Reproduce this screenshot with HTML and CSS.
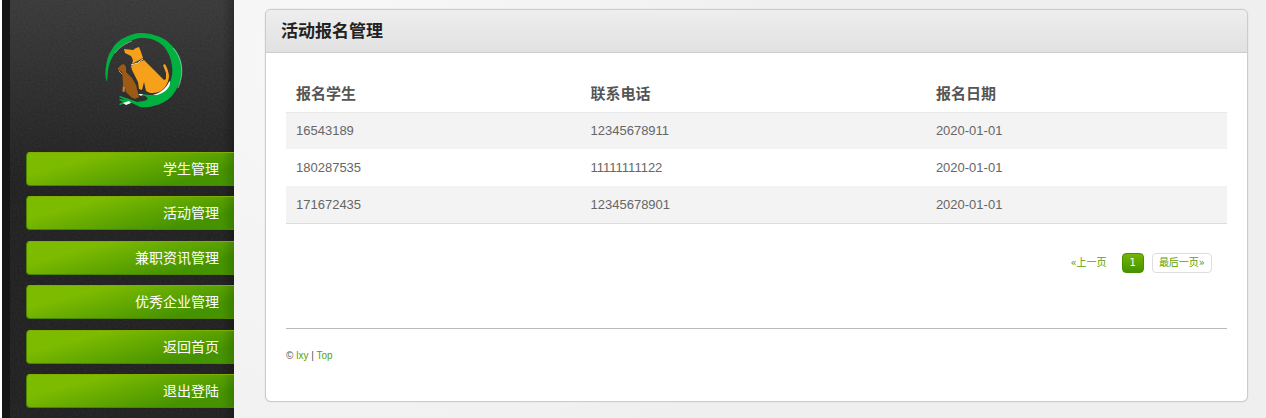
FILE: index.html
```
<!DOCTYPE html>
<html lang="zh-CN">
<head>
    <meta charset="UTF-8">
    <meta name="viewport" content="width=device-width, initial-scale=1.0">
    <title>活动报名管理</title>
    <link rel="stylesheet" href="styles.css">
</head>
<body id="top">

    <div class="sidebar">
        <svg class="logo" viewBox="0 0 80 80" aria-hidden="true">
            <!-- ring and hand -->
            <path fill="#00b140" d="M3 50C1 45 1 40 2 34C3 28 4 23 7 19C11 12 15 8 20 6C25 3 31 1 37 1C43 1 48 2 53 4C60 6 65 10 70 16C75 22 78 29 78 37C78 44 77 50 73 56C70 62 66 67 60 70C53 74 44 76 36 75L28 71L22 71L16 73L15 72L19 70L15 68L16 67L22 68L15 65L16 64L25 67L33 70L40 69C44 68 45 66 41 64L35 63L36 62L46 63C51 63 55 62 58 60C62 57 64 54 66 50C68 45 69 40 68 34C67 28 66 24 63 19C60 14 57 11 52 9C47 6 42 6 36 6C31 7 27 8 23 11C18 13 14 17 11 21C7 26 5 32 4 38Z"/>
            <path fill="#fff" d="M49 63C57 61 62 56 65 50L66 49C67 55 61 61 53 63ZM19 71L25 69L27 71L22 73ZM34 62L39 62L37 64Z"/>
            <path fill="none" stroke="#ccc" stroke-width="0.6" d="M11 21C14 17 18 13 28 9M69 16C79 27 80 43 74 56"/>
            <!-- big dog -->
            <path fill="#f7a11a" d="M20 17L29 18L32 16L35 15L37 20L39 26L28 32L29 28L27 24L21 21Z"/>
            <path fill="#f7a11a" d="M27 34L40 28L50 38L60 48L62 47L62 41L59 33L61 32C64 37 65 42 65 45C64 51 62 55 57 59C53 61 49 61 46 61L42 59L40 50L38 58L35 57L34 50L28 38Z"/>
            <path fill="none" stroke="#fbe0b5" stroke-width="1" d="M27 33Q34 32 39 27"/>
            <!-- small dog -->
            <path fill="#9c5a14" d="M14 36L17 33L20 32L22 35L22 40L28 46L32 53L35 65L31 67L27 65L22 60L21 56L20 60L18 59L19 52L18 40L14 38Z"/>
            <path fill="none" stroke="#e8e0d8" stroke-width="0.6" d="M15 39L18 42M20 55L20 60"/>
        </svg>

        <ul class="menu">
            <li><a href="#">学生管理</a></li>
            <li><a href="#">活动管理</a></li>
            <li><a href="#">兼职资讯管理</a></li>
            <li><a href="#">优秀企业管理</a></li>
            <li><a href="#">返回首页</a></li>
            <li><a href="#">退出登陆</a></li>
        </ul>
    </div>

    <div class="main">
        <div class="content-box">
            <h3 class="content-title">活动报名管理</h3>

            <div class="content">
                <table>
                    <thead>
                        <tr>
                            <th class="col-student">报名学生</th>
                            <th class="col-phone">联系电话</th>
                            <th>报名日期</th>
                        </tr>
                    </thead>
                    <tbody>
                        <tr>
                            <td>16543189</td>
                            <td>12345678911</td>
                            <td>2020-01-01</td>
                        </tr>
                        <tr>
                            <td>180287535</td>
                            <td>11111111122</td>
                            <td>2020-01-01</td>
                        </tr>
                        <tr>
                            <td>171672435</td>
                            <td>12345678901</td>
                            <td>2020-01-01</td>
                        </tr>
                    </tbody>
                </table>

                <div class="pagination">
                    <a href="#">«上一页</a>
                    <a href="#" class="number current">1</a>
                    <a href="#" class="number">最后一页»</a>
                </div>

                <div class="footer">
                    © <a href="#">lxy</a> | <a href="#top">Top</a>
                </div>
            </div>
        </div>
    </div>

</body>
</html>
```
FILE: styles.css
```
* {
    box-sizing: border-box;
}

body {
    display: flex;
    min-height: 100vh;
    margin: 0;
    padding-left: 2px;
    font-family: "Liberation Sans", "Noto Sans CJK SC", sans-serif;
    font-size: 13px;
    color: #555;
    background-color: #fff;
}

a {
    color: #57a000;
    text-decoration: none;
}

/* Sidebar */
.sidebar {
    display: flex;
    flex-direction: column;
    flex: none;
    width: 232px;
    padding: 32px 0 10px 16px;
    border-left: 8px solid #161616;
    background-color: #222;
    /* fine grain over a dark fade */
    background-image:
        linear-gradient(to left, rgba(0, 0, 0, 0.25), transparent 12px),
        url("data:image/svg+xml,%3Csvg xmlns='http://www.w3.org/2000/svg' width='200' height='200'%3E%3Cfilter id='n'%3E%3CfeTurbulence type='fractalNoise' baseFrequency='0.5' numOctaves='2' stitchTiles='stitch'/%3E%3CfeColorMatrix type='saturate' values='0'/%3E%3C/filter%3E%3Crect width='200' height='200' filter='url(%23n)' opacity='0.09'/%3E%3C/svg%3E"),
        linear-gradient(#363636, #1d1d1d 180px);
}

.logo {
    display: block;
    width: 80px;
    height: 80px;
    margin: 0 0 40px 78px;
}

.menu {
    display: flex;
    flex: 1;
    flex-direction: column;
    justify-content: space-between;
    gap: 8px;
    margin: 0;
    padding: 0;
    list-style: none;
}

.menu a {
    display: block;
    height: 34px;
    padding-right: 15px;
    border: 1px solid #4b8400;
    border-top-color: #7fae00;
    border-right: none;
    border-radius: 4px 0 0 4px;
    background:
        linear-gradient(to left, rgba(0, 0, 0, 0.15), transparent 12px),
        linear-gradient(165deg, #7dbb00 25%, #459300 80%);
    color: #fff;
    font-size: 14px;
    line-height: 32px;
    text-align: right;
}

/* Main content */
.main {
    flex: 1;
    padding: 9px 18px 16px 31px;
    background: radial-gradient(circle at 100px 60px, #f8f8f8, #efefef 500px);
}

.content-box {
    border: 1px solid #ccc;
    border-radius: 6px;
    background-color: #fff;
    box-shadow: 0 0 1px #bbb;
}

.content-title {
    height: 43px;
    margin: 0;
    padding-left: 15px;
    border-bottom: 1px solid #ccc;
    border-radius: 5px 5px 0 0;
    background: linear-gradient(#eee, #e1e1e1);
    color: #222;
    font-size: 17px;
    line-height: 44px;
}

.content {
    padding: 20px 20px 38px;
}

table {
    width: 100%;
    border-collapse: collapse;
    table-layout: fixed;
    border-bottom: 1px solid #ddd;
}

th,
td {
    height: 37px;
    padding: 0 10px;
    text-align: left;
}

th {
    height: 39px;
    font-size: 15px;
}

td {
    color: #666;
}

.col-student {
    width: 31.3%;
}

.col-phone {
    width: 36.7%;
}

tbody {
    border-top: 1px solid #e8e8e8;
}

tbody tr:nth-child(odd) {
    background-color: #f3f3f3;
}

.pagination {
    display: flex;
    justify-content: flex-end;
    gap: 8px;
    padding: 29px 15px 55px;
    font-family: "DejaVu Sans", "Noto Sans CJK SC", sans-serif;
    font-size: 10px;
    line-height: 18px;
}

.pagination a {
    padding: 1px 7px;
}

.pagination .number {
    padding: 0 6px;
    border: 1px solid #ddd;
    border-radius: 4px;
}

.pagination .current {
    padding: 0 7px;
    border-color: #459300;
    background: linear-gradient(#76b500, #459300);
    color: #fff;
}

.footer {
    padding-top: 20px;
    border-top: 1px solid #bbb;
    font-size: 10px;
    line-height: 14px;
}
```
